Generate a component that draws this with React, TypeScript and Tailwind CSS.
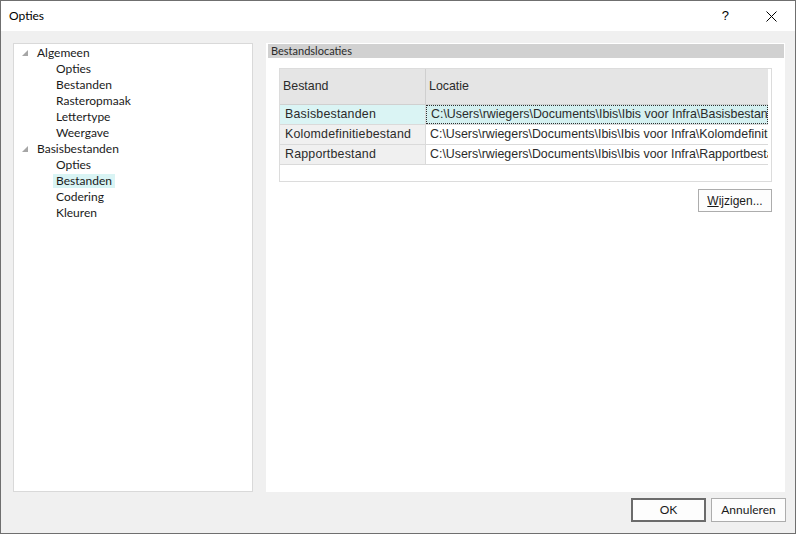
import React from 'react';

const tree = [
  { label: 'Algemeen', children: ['Opties', 'Bestanden', 'Rasteropmaak', 'Lettertype', 'Weergave'] },
  { label: 'Basisbestanden', children: ['Opties', 'Bestanden', 'Codering', 'Kleuren'] },
];

const rows = [
  { name: 'Basisbestanden', path: 'C:\\Users\\rwiegers\\Documents\\Ibis\\Ibis voor Infra\\Basisbestanden' },
  { name: 'Kolomdefinitiebestand', path: 'C:\\Users\\rwiegers\\Documents\\Ibis\\Ibis voor Infra\\Kolomdefinitie.xml' },
  { name: 'Rapportbestand', path: 'C:\\Users\\rwiegers\\Documents\\Ibis\\Ibis voor Infra\\Rapportbestand.xml' },
];

const ui = { fontFamily: 'Lato, "Noto Sans", sans-serif' };
const ms = { fontFamily: '"Liberation Sans", Arial, sans-serif' };

function Expander() {
  return (
    <svg width="6" height="6" viewBox="0 0 6 6" className="shrink-0">
      <polygon points="6,0 6,6 0,6" fill="#a6a6a6" />
    </svg>
  );
}

function Tree() {
  return (
    <div className="w-[240px] h-full bg-white border border-[#d9d9d9] pt-[1px] text-[12px] text-[#1a1a1a]" style={ui}>
      {tree.map((g, gi) => (
        <div key={gi}>
          <div className="h-[16px] flex items-center pl-[8px]">
            <Expander />
            <span className="ml-[9px] leading-none">{g.label}</span>
          </div>
          {g.children.map((c, ci) => {
            const sel = gi === 1 && c === 'Bestanden';
            return (
              <div key={ci} className="h-[16px] flex items-center pl-[39px]">
                <span className={`px-[3px] leading-[14px] ${sel ? 'bg-[#d9f4f4]' : ''}`}>{c}</span>
              </div>
            );
          })}
        </div>
      ))}
    </div>
  );
}

function Grid() {
  return (
    <div className="ml-[13px] mt-[10px] w-[493px] h-[114px] border border-[#dcdcdc] bg-white text-[12.4px] text-[#2b2b2b]" style={ms}>
      <div className="flex h-[36px] w-[488px] bg-[#e5e5e5] border-b border-[#d0d0d0]">
        <div className="w-[146px] border-r border-[#cfcfcf] flex items-center pl-[3px]">Bestand</div>
        <div className="flex-1 flex items-center pl-[3px]">Locatie</div>
      </div>
      {rows.map((r, i) => (
        <div key={i} className="flex h-[20px] w-[488px] border-b border-[#dadada]">
          <div className={`w-[146px] border-r border-[#dadada] flex items-center pl-[5px] tracking-[0.2px] ${i === 0 ? 'bg-[#daf4f4]' : 'bg-[#f0f0f0]'}`}>
            {r.name}
          </div>
          <div
            className={`flex-1 min-w-0 flex items-center pl-[4px] overflow-hidden whitespace-nowrap ${i === 0 ? 'bg-[#d4f0f0] border border-dotted border-[#303030] pl-[3px]' : ''}`}
          >
            {r.path}
          </div>
        </div>
      ))}
    </div>
  );
}

function Btn({ children, def }: { children: React.ReactNode; def?: boolean }) {
  return (
    <div
      className={`w-[75px] h-[24px] flex items-center justify-center bg-[#fdfdfd] text-[12px] text-[#1a1a1a] ${def ? 'border-2 border-[#6b6b6b]' : 'border border-[#adadad]'}`}
      style={ui}
    >
      {children}
    </div>
  );
}

export default function App() {
  return (
    <div className="w-[796px] h-[534px] border border-[#6f6f6f] bg-[#f0f0f0] flex flex-col overflow-hidden">
      <div className="h-[30px] bg-white flex items-center shrink-0">
        <span className="ml-[8px] text-[12px] text-black" style={ui}>Opties</span>
        <span className="ml-auto text-[13px] text-black mr-[37px]" style={ms}>?</span>
        <svg width="11" height="11" viewBox="0 0 11 11" className="mr-[18px]">
          <path d="M0.5 0.5 L10.5 10.5 M10.5 0.5 L0.5 10.5" stroke="#000" strokeWidth="1" />
        </svg>
      </div>
      <div className="flex h-[449px] mt-[12px] ml-[12px] shrink-0">
        <Tree />
        <div className="ml-[13px] w-[519px] h-full bg-white pt-[1px]">
          <div className="ml-[2px] w-[516px] h-[14px] bg-[#d1d1d1] flex items-center pl-[3px] text-[11px] text-[#2a2a2a]" style={ui}>
            Bestandslocaties
          </div>
          <Grid />
          <div className="flex justify-end w-[506px] mt-[7px]">
            <div className="w-[74px] h-[23px] border border-[#adadad] bg-[#fdfdfd] flex items-center justify-center text-[12px] text-[#1a1a1a]" style={ms}>
              <span><span className="underline">W</span>ijzigen...</span>
            </div>
          </div>
        </div>
      </div>
      <div className="flex justify-end mt-[6px] mr-[9px] gap-[5px]">
        <Btn def>OK</Btn>
        <Btn>Annuleren</Btn>
      </div>
    </div>
  );
}
